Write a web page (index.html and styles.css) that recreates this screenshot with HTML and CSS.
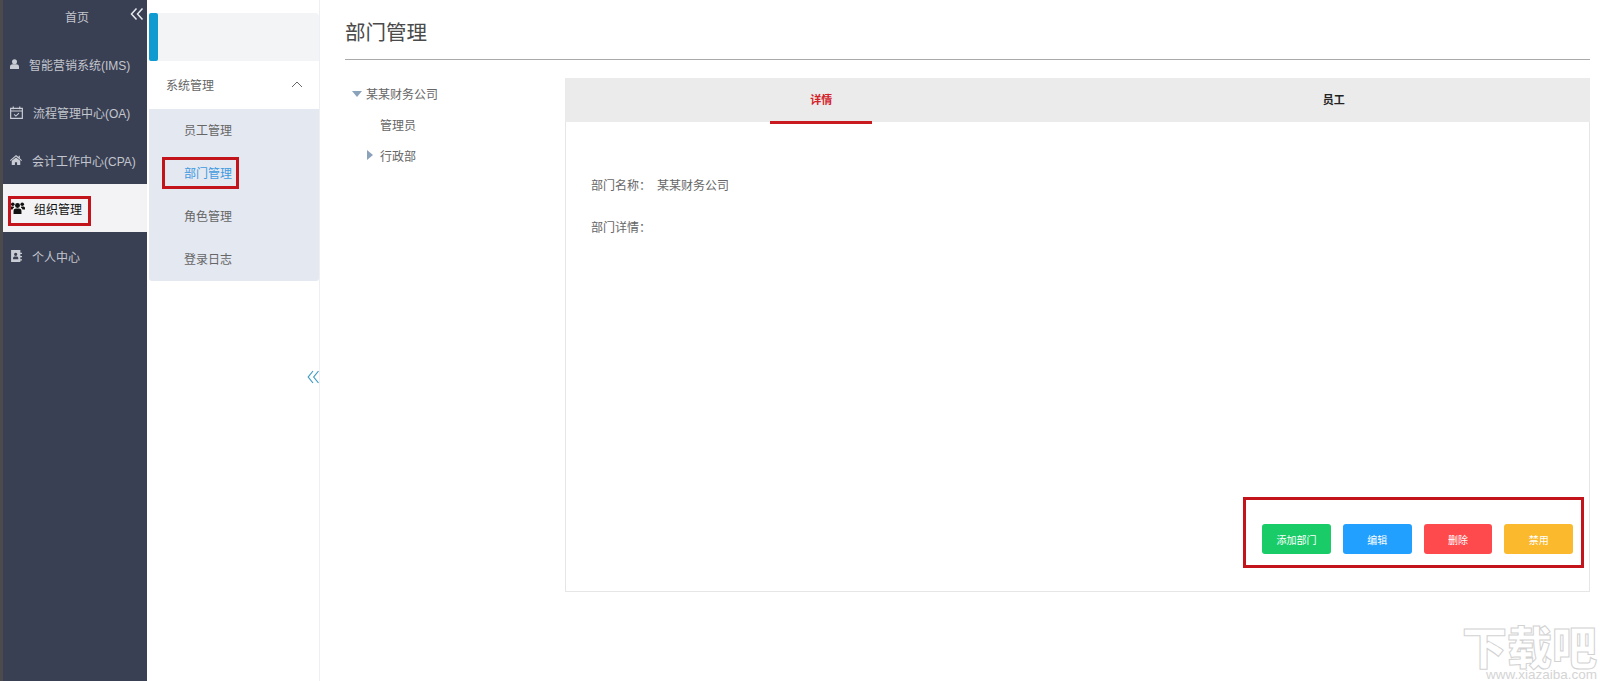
FILE: index.html
```html
<!DOCTYPE html>
<html lang="zh">
<head>
<meta charset="utf-8">
<title>部门管理</title>
<link rel="stylesheet" href="styles.css">
</head>
<body>
<div class="app">
  <aside class="sidebar">
    <div class="side-head">
      <span>首页</span>
      <svg class="side-collapse" viewBox="0 0 14 14" width="14" height="14"><path d="M6.500 1.500 1.500 7l5 5.500M12.500 1.500 7.500 7l5 5.500" fill="none" stroke="#e6e8ee" stroke-width="1.500"/></svg>
    </div>
    <nav class="side-nav">
      <a class="side-item">
        <svg viewBox="0 0 9 10" width="9" height="10"><circle cx="4.500" cy="2.800" r="2.500" fill="#c9ccd4"/><path d="M0 10V7.500C0 6 1.500 5.300 2.700 5.200h3.600C7.500 5.300 9 6 9 7.500V10z" fill="#c9ccd4"/></svg>
        <span>智能营销系统(IMS)</span>
      </a>
      <a class="side-item">
        <svg viewBox="0 0 12 12" width="13" height="13"><path d="M.6 2.200h10.800v9.200H.6zM.6 4.600h10.800M3 .5v2.500M9 .5v2.500" fill="none" stroke="#c9ccd4" stroke-width="1.100"/><path d="M3.800 7.800 5.400 9.300 8.300 6.500" fill="none" stroke="#c9ccd4"/></svg>
        <span>流程管理中心(OA)</span>
      </a>
      <a class="side-item">
        <svg viewBox="0 0 11 9" width="12" height="10"><path d="M5.500 0 0 4.700l.6.700L5.500 1.300l4.900 4.100.6-.7-2-1.700V.6H8v1.100z" fill="#c9ccd4"/><path d="M1.600 5.300 5.500 2.100l3.900 3.200V9H6.500V6.500h-2V9H1.600z" fill="#c9ccd4"/></svg>
        <span>会计工作中心(CPA)</span>
      </a>
      <a class="side-item is-active">
        <svg viewBox="0 0 14 11" width="15" height="12"><circle cx="7" cy="3.200" r="2.300" fill="#111"/><path d="M3.300 11V8.200C3.300 6.800 4.600 6 5.600 6h2.800c1 0 2.300.8 2.300 2.200V11z" fill="#111"/><circle cx="2.600" cy="2" r="1.700" fill="#111"/><circle cx="11.400" cy="2" r="1.700" fill="#111"/><path d="M0 7V5.400C0 4.500.8 4 1.600 4h1.800l.4 1.300C2.900 5.600 2.500 6.200 2.400 7zM14 7V5.400c0-.9-.8-1.400-1.600-1.400h-1.800l-.4 1.300c.9.300 1.300.9 1.400 1.700z" fill="#111"/></svg>
        <span>组织管理</span>
      </a>
      <a class="side-item">
        <svg viewBox="0 0 11 11" width="12" height="12"><path d="M1 0h8.500v2.500H11v1.200H9.500v1.800H11v1.200H9.500v1.800H11v1.200H9.500V11H1zM5.200 2.500a1.500 1.500 0 1 0 0 3 1.500 1.500 0 0 0 0-3zM2.800 8.500h4.800V7.500C7.600 6.600 6.900 6 6 6H4.400c-.9 0-1.600.6-1.600 1.500z" fill="#c9ccd4" fill-rule="evenodd"/></svg>
        <span>个人中心</span>
      </a>
    </nav>
  </aside>

  <section class="submenu">
    <div class="sub-top"><i class="sub-accent"></i></div>
    <div class="sub-group">
      <span>系统管理</span>
      <svg viewBox="0 0 12 7" width="12" height="7"><path d="M1 6 6 1l5 5" fill="none" stroke="#666" stroke-width="1"/></svg>
    </div>
    <ul class="sub-list">
      <li>员工管理</li>
      <li class="is-current">部门管理</li>
      <li>角色管理</li>
      <li>登录日志</li>
    </ul>
    <svg class="sub-collapse" viewBox="0 0 12 14" width="12" height="14"><path d="M6 1 1.200 7 6 13M11.500 1 6.700 7l4.800 6" fill="none" stroke="#3f9bc4" stroke-width="1.200"/></svg>
  </section>

  <main class="main">
    <h1 class="title">部门管理</h1>
    <div class="content">
      <div class="tree">
        <div class="tree-row"><i class="arrow-down"></i><span>某某财务公司</span></div>
        <div class="tree-row tree-child">管理员</div>
        <div class="tree-row tree-branch"><i class="arrow-right"></i><span>行政部</span></div>
      </div>
      <div class="panel">
        <div class="tabs">
          <div class="tab is-selected"><span>详情</span></div>
          <div class="tab"><span>员工</span></div>
        </div>
        <div class="details">
          <div class="detail-row"><span class="detail-label">部门名称：</span><span>某某财务公司</span></div>
          <div class="detail-row"><span class="detail-label">部门详情：</span></div>
        </div>
        <div class="actions">
          <button class="btn btn-green">添加部门</button>
          <button class="btn btn-blue">编辑</button>
          <button class="btn btn-red">删除</button>
          <button class="btn btn-yellow">禁用</button>
        </div>
      </div>
    </div>
  </main>

  <div class="mark mark-org"></div>
  <div class="mark mark-dept"></div>
  <div class="mark mark-actions"></div>

  <div class="watermark">
    <div class="wm-big">下载吧</div>
    <div class="wm-small">www.xiazaiba.com</div>
  </div>
</div>
</body>
</html>
```

FILE: styles.css
```css
* { box-sizing: border-box; }
html, body { margin: 0; height: 100%; }
body {
  font-family: "Liberation Sans", "Noto Sans CJK SC", sans-serif;
  font-size: 12px;
  color: #666;
  background: #fff;
  overflow: hidden;
}
.app { position: relative; display: flex; height: 681px; }

/* left sidebar */
.sidebar {
  width: 147px;
  flex: none;
  background: #3a4053;
  border-left: 3px solid #4b4b4b;
  color: #c3c6ce;
}
.side-head {
  position: relative;
  height: 40px;
  padding: 9px 0 0 4px;
  line-height: 18px;
  text-align: center;
}
.side-collapse { position: absolute; top: 7px; right: 3px; }
.side-item {
  display: flex;
  align-items: center;
  gap: 10px;
  height: 48px;
  padding-left: 7px;
  white-space: nowrap;
}
.side-item svg { flex: none; }
.side-item.is-active { background: #f3f3f5; color: #111; gap: 9px; }

/* submenu */
.submenu {
  position: relative;
  width: 171px;
  flex: none;
  margin-left: 2px;
  padding-top: 13px;
  border-right: 1px solid #eeeff2;
}
.sub-top {
  height: 48px;
  background: #f3f4f6;
  border-radius: 4px 4px 0 0;
}
.sub-accent {
  display: block;
  width: 9px;
  height: 48px;
  background: #0f9bd0;
  border-radius: 2px;
}
.sub-group {
  display: flex;
  align-items: center;
  justify-content: space-between;
  height: 48px;
  padding: 0 16px 2px 17px;
  color: #666;
}
.sub-list {
  list-style: none;
  margin: 0;
  padding: 1px 0 0;
  height: 172px;
  background: #e4e8f1;
  border-radius: 0 0 3px 3px;
}
.sub-list li {
  height: 43px;
  line-height: 43px;
  padding-left: 35px;
  color: #666;
}
.sub-list .is-current { color: #3f9ae0; }
.sub-collapse { position: absolute; top: 370px; right: 0; }

/* main */
.main { flex: 1; min-width: 0; padding: 0 10px 0 25px; }
.title {
  margin: 0;
  height: 60px;
  padding-top: 19px;
  font-size: 20.500px;
  font-weight: 400;
  line-height: 28px;
  color: #4a4a4a;
  border-bottom: 1px solid #aaa;
}
.content { display: flex; margin-top: 18px; }
.tree { width: 220px; flex: none; }
.tree-row {
  display: flex;
  align-items: center;
  height: 31px;
  padding-left: 7px;
  color: #666;
}
.tree-child, .tree-branch { padding-left: 35px; }
.tree-branch { position: relative; }
.arrow-down {
  width: 0;
  height: 0;
  margin-right: 4px;
  border-left: 5px solid transparent;
  border-right: 5px solid transparent;
  border-top: 6px solid #8ba2bb;
}
.arrow-right {
  position: absolute;
  left: 22px;
  top: 10px;
  width: 0;
  height: 0;
  border-top: 5px solid transparent;
  border-bottom: 5px solid transparent;
  border-left: 6px solid #8ba2bb;
}
.panel {
  flex: 1;
  display: flex;
  flex-direction: column;
  height: 514px;
  border: 1px solid #e6e6e6;
  border-top: 0;
}
.tabs { display: flex; height: 44px; flex: none; background: #ecebec; margin: 0 -1px; padding-bottom: 3px; }
.tab {
  position: relative;
  flex: 1;
  display: flex;
  align-items: center;
  justify-content: center;
  font-size: 11px;
  font-weight: 700;
  color: #222;
}
.tab.is-selected { color: #d3222a; }
.tab.is-selected::after {
  content: "";
  position: absolute;
  left: 50%;
  bottom: -5px;
  width: 102px;
  height: 3px;
  margin-left: -51px;
  background: #c81a1f;
}
.details { flex: 1; padding: 43px 25px 0; }
.detail-row { height: 42px; line-height: 42px; color: #666; }
.detail-label { display: inline-block; width: 66px; }
.actions {
  display: flex;
  justify-content: flex-end;
  gap: 12px;
  padding: 0 16px 37px 0;
}
.btn {
  width: 68.700px;
  height: 30px;
  padding: 0;
  border: 0;
  border-radius: 3px;
  font: inherit;
  font-size: 10px;
  color: #fff;
}
.btn-green { background: #19cc68; }
.btn-blue { background: #22a0ff; }
.btn-red { background: #ff4a4d; }
.btn-yellow { background: #fbb92e; }

/* red annotation frames */
.mark { position: absolute; border: 3px solid #c3141b; pointer-events: none; }
.mark-org { left: 8px; top: 196px; width: 83px; height: 30px; }
.mark-dept { left: 162px; top: 157px; width: 77px; height: 32px; }
.mark-actions { left: 1243px; top: 497px; width: 341px; height: 71px; }

/* watermark */
.watermark {
  position: absolute;
  right: 3px;
  bottom: 0;
  width: 135px;
  height: 58px;
  text-align: right;
}
.wm-big {
  font-family: "Noto Sans CJK SC", sans-serif;
  font-size: 45px;
  line-height: 45px;
  font-weight: 900;
  color: #fff;
  -webkit-text-stroke: 1px #d2d2d2;
  text-align: center;
}
.wm-small {
  font-size: 13.500px;
  line-height: 13px;
  color: #d4d4d4;
}
```
